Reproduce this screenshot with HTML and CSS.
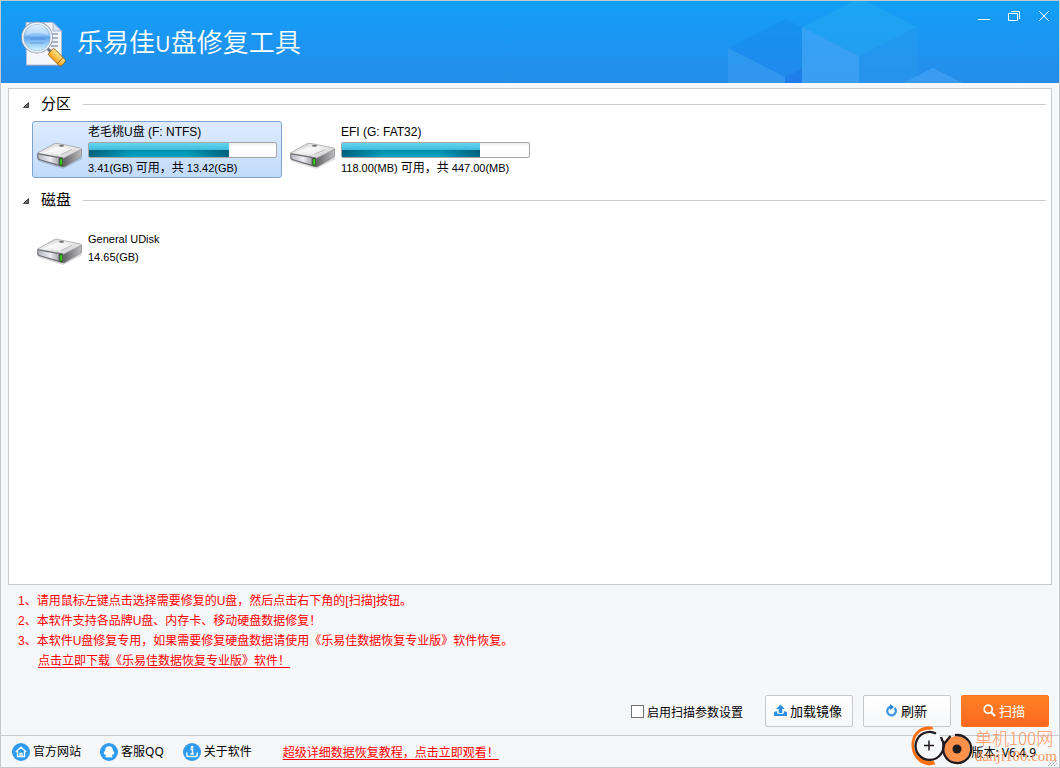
FILE: index.html
```html
<!DOCTYPE html>
<html lang="zh-CN">
<head>
<meta charset="utf-8">
<meta name="viewport" content="width=device-width, initial-scale=1">
<title>乐易佳U盘修复工具</title>
<link rel="stylesheet" href="styles.css">
</head>
<body>
<svg class="defs" width="0" height="0" aria-hidden="true">
  <defs>
    <linearGradient id="driveTop" x1="0" y1="0" x2="1" y2="1">
      <stop offset="0" stop-color="#b9b9bb"/><stop offset=".4" stop-color="#f4f4f5"/><stop offset="1" stop-color="#c4c4c6"/>
    </linearGradient>
    <linearGradient id="driveSide" x1="0" y1="0" x2="1" y2="0">
      <stop offset="0" stop-color="#5c5c5e"/><stop offset="1" stop-color="#bcbcbe"/>
    </linearGradient>
    <linearGradient id="driveFront" x1="0" y1="0" x2="1" y2="0">
      <stop offset="0" stop-color="#b8b8c2"/><stop offset=".6" stop-color="#ededf6"/><stop offset="1" stop-color="#a8a8b0"/>
    </linearGradient>
    <symbol id="drive" viewBox="0 0 48 28">
      <path d="M2 18 27 26 46 16" fill="none" stroke="#000" stroke-opacity=".15" stroke-width="2"/>
      <path d="M27 15 45.500 7v7.500L28 25l-2-1z" fill="url(#driveSide)" stroke="#77777a" stroke-width=".6"/>
      <path d="M1.500 11 18 1.800q1.500-.7 3-.5L44.500 6q1.500.6.500 1.600L28 16q-1 .4-2 .1z" fill="url(#driveTop)" stroke="#969698" stroke-width=".7"/>
      <path d="M10 9 21 4.500l14 2.700-9 5q-2 .6-4 .2z" fill="#fff" fill-opacity=".45"/>
      <path d="M25 12.500 36 7.500" stroke="#aaa" stroke-width=".7"/>
      <ellipse cx="25.500" cy="3.800" rx="2.600" ry="1.100" fill="#77787c"/>
      <path d="M1.300 11.300 26 15.300q1.500.4 1.500 2V24q0 1.300-1.500 1L3 18q-1.700-.5-1.800-2z" fill="#6d6d72"/>
      <path d="M2.300 12.400 22.500 16v6.500L4 17.300q-1.700-.6-1.700-2z" fill="url(#driveFront)"/>
      <path d="M23.400 16.200h3.200v8l-3.200-.9z" fill="#235a16"/>
      <path d="M24.300 17.200h1.600v5.600l-1.600-.4z" fill="#3be21d"/>
    </symbol>
  </defs>
</svg>
<div class="window">
  <header class="titlebar">
    <svg class="cubes" viewBox="720 1 250 82" aria-hidden="true">
      <path d="M728 48 785 19 802 27V69L785 77z" fill="#1580ec" fill-opacity=".3"/>
      <path d="M728 48 785 77V83H728z" fill="#4aa7f5" fill-opacity=".35"/>
      <path d="M785 77 802 69V83H785z" fill="#1d7ae8" fill-opacity=".75"/>
      <path d="M802 27 860-2 917 27 859 56z" fill="#2bb0f3" fill-opacity=".4"/>
      <path d="M802 27 859 56V83H802z" fill="#45a8f6" fill-opacity=".65"/>
      <path d="M859 56 917 27V83H859z" fill="#2a9bf0" fill-opacity=".45"/>
      <path d="M903 83 933 68 963 83z" fill="#3f9ff3" fill-opacity=".8"/>
    </svg>
    <div class="brand">
      <svg class="logo" width="46" height="48" viewBox="0 0 46 48" aria-hidden="true">
        <defs>
          <linearGradient id="lens" x1="0" y1="0" x2="0" y2="1">
            <stop offset="0" stop-color="#d2e9fd"/><stop offset=".42" stop-color="#8cc2f6"/><stop offset=".5" stop-color="#5da3ec"/><stop offset=".7" stop-color="#93caf6"/><stop offset="1" stop-color="#d9fbff"/>
          </linearGradient>
          <linearGradient id="handle" x1="0" y1="1" x2="1" y2="0">
            <stop offset="0" stop-color="#a95d09"/><stop offset=".35" stop-color="#f5a51c"/><stop offset=".65" stop-color="#ffe184"/><stop offset="1" stop-color="#bd6c0b"/>
          </linearGradient>
        </defs>
        <path d="M5 2.500h27l8.500 8.500v34h-35z" fill="#f5f6fc" stroke="#aebcdc"/>
        <path d="M5.500 45.500h35" stroke="#8298bb"/>
        <path d="M32 2.500V11h8.500z" fill="#dbe4f3" stroke="#91a6c9" stroke-width=".8"/>
        <path d="M30 14h7M31 18h6M31 22h6M30 26h7" stroke="#8e9ab4" stroke-width="1.500"/>
        <path d="M25 27l5 5" stroke="#6b7587" stroke-width="3"/>
        <circle cx="16" cy="17.500" r="14.500" fill="url(#lens)" stroke="#8a9bb2" stroke-width="2.800"/>
        <circle cx="16" cy="17.500" r="14.200" fill="none" stroke="#e9f2f9" stroke-width="1.700"/>
        <path d="M9 19h15M9 23h14" stroke="#346eb9" stroke-opacity=".3" stroke-width="1.500"/>
        <path d="M4.500 15Q7 5 16 4.500 26 5 27.500 15 16 11 4.500 15z" fill="#fff" fill-opacity=".35"/>
        <path d="m28 33 3.500-4q1-1 2.200 0L44 39.500q1 1.300 0 2.500l-3.200 3.500q-1.300 1-2.600 0L28 35.500q-1.200-1.200 0-2.500z" fill="url(#handle)" stroke="#8e510d" stroke-width=".8"/>
        <path d="m36.500 43.500 5.500-6" stroke="#b1620d" stroke-width="1"/>
      </svg>
      <h1 class="title">乐易佳<span class="title-latin">U</span>盘修复工具</h1>
    </div>
    <div class="controls">
      <button type="button" class="control" aria-label="最小化"><svg width="12" height="12" viewBox="0 0 12 12"><path d="M0 9.500h12"/></svg></button>
      <button type="button" class="control" aria-label="还原"><svg width="12" height="12" viewBox="0 0 12 12"><path d="M.5 3.500h9v7h-9zM3 1.500h8.500V9"/></svg></button>
      <button type="button" class="control" aria-label="关闭"><svg width="12" height="12" viewBox="0 0 12 12"><path d="M1 1l10 10M11 1 1 11"/></svg></button>
    </div>
  </header>

  <main class="main">
    <div class="panel">
      <section>
        <h2 class="group"><svg width="6" height="6" viewBox="0 0 6 6" aria-hidden="true"><path d="M5.500.5v5H.5z" fill="#666" stroke="#444"/></svg><span class="group-name">分区</span></h2>
        <div class="drives">
          <button type="button" class="drive selected">
            <svg class="drive-icon" width="48" height="28"><use href="#drive"/></svg>
            <span class="drive-info">
              <span class="drive-name">老毛桃U盘 (F: NTFS)</span>
              <span class="usage"><span class="used" style="width:74.6%"></span></span>
              <span class="drive-size">3.41(GB) <span class="cjk">可用，共</span> 13.42(GB)</span>
            </span>
          </button>
          <button type="button" class="drive">
            <svg class="drive-icon" width="48" height="28"><use href="#drive"/></svg>
            <span class="drive-info">
              <span class="drive-name">EFI (G: FAT32)</span>
              <span class="usage"><span class="used" style="width:73.6%"></span></span>
              <span class="drive-size">118.00(MB) <span class="cjk">可用，共</span> 447.00(MB)</span>
            </span>
          </button>
        </div>
      </section>
      <section>
        <h2 class="group"><svg width="6" height="6" viewBox="0 0 6 6" aria-hidden="true"><path d="M5.500.5v5H.5z" fill="#666" stroke="#444"/></svg><span class="group-name">磁盘</span></h2>
        <div class="drives">
          <button type="button" class="drive disk">
            <svg class="drive-icon" width="48" height="28"><use href="#drive"/></svg>
            <span class="drive-info">
              <span class="drive-size">General UDisk</span>
              <span class="drive-size">14.65(GB)</span>
            </span>
          </button>
        </div>
      </section>
    </div>
    <div class="notes">
      <p>1、请用鼠标左键点击选择需要修复的U盘，然后点击右下角的[扫描]按钮。</p>
      <p>2、本软件支持各品牌U盘、内存卡、移动硬盘数据修复！</p>
      <p>3、本软件U盘修复专用，如果需要修复硬盘数据请使用《乐易佳数据恢复专业版》软件恢复。</p>
      <p class="indent"><a class="link" href="#download">点击立即下载《乐易佳数据恢复专业版》软件！</a></p>
    </div>
    <div class="actions">
      <label class="option"><input type="checkbox" class="check"><span>启用扫描参数设置</span></label>
      <button type="button" class="btn">
        <svg width="13" height="13" viewBox="0 0 13 13" aria-hidden="true"><path d="M6.500.5 10.800 5H8.300v4H4.700V5H2.200z" fill="#2d8fe6"/><path d="M0 8.200q1-1 3-1v1.600l1 1.200h5l1-1.200V7.200q2 0 3 1V12H0z" fill="#2d8fe6"/></svg>
        <span>加载镜像</span>
      </button>
      <button type="button" class="btn">
        <svg width="13" height="13" viewBox="0 0 13 13" aria-hidden="true"><path d="M9.500 3.900A4.300 4.300 0 1 1 4.500 3.200L7 3" fill="none" stroke="#3b98e8" stroke-width="2.300"/><path d="M5 0v6l4-3z" fill="#2783da"/></svg>
        <span>刷新</span>
      </button>
      <button type="button" class="btn primary">
        <svg width="13" height="13" viewBox="0 0 13 13" aria-hidden="true"><circle cx="5.200" cy="5.200" r="4" fill="none" stroke="#fff" stroke-width="1.700"/><path d="m8 8 4 4" stroke="#fff" stroke-width="2.200"/></svg>
        <span>扫描</span>
      </button>
    </div>
  </main>

  <footer class="footer">
    <nav class="nav">
      <a href="#site"><svg width="18" height="18" viewBox="0 0 18 18" aria-hidden="true"><circle cx="9" cy="9" r="9" fill="#2f9bf0"/><path d="m3.800 9 5.200-4.800L14.200 9M5.500 8.500v5h7v-5M8 13.500v-3.200h2v3.200" fill="none" stroke="#fff" stroke-width="1.300"/></svg>官方网站</a>
      <a href="#service"><svg width="18" height="18" viewBox="0 0 18 18" aria-hidden="true"><circle cx="9" cy="9" r="9" fill="#2f9bf0"/><path d="M9 3.200c2.700 0 3.900 2 3.900 4.300 1 1.300 1.700 3 1.200 4-.4.300-.9-.1-1.300-.6-.2.800-.5 1.200-1 1.700.8.400 1.200 1.600-.3 1.800H9.800L9 14l-.8.400H6.500c-1.500-.2-1.100-1.400-.3-1.800-.5-.5-.8-.9-1-1.700-.4.500-.9.900-1.300.6-.5-1 .2-2.700 1.200-4C5.100 5.200 6.300 3.200 9 3.200z" fill="#fff"/></svg>客服QQ</a>
      <a href="#about"><svg width="18" height="18" viewBox="0 0 18 18" aria-hidden="true"><circle cx="9" cy="9" r="9" fill="#2f9bf0"/><circle cx="9" cy="4" r="1.300" fill="#fff"/><path d="M7.500 6.300h2V11M7.500 11h3.300" fill="none" stroke="#fff" stroke-width="1.500"/><path d="M3.800 9.500V12q0 1.500 1.500 1.500h7.400q1.500 0 1.500-1.500V9.500" fill="none" stroke="#fff" stroke-width="1.400"/></svg>关于软件</a>
    </nav>
    <a class="link" href="#tutorial">超级详细数据恢复教程，点击立即观看！</a>
    <span class="version">版本: V6.4.9</span>
    <svg class="grip" width="10" height="10" viewBox="0 0 10 10" aria-hidden="true"><path d="M1 10l9-9M4 10l6-6M7 10l3-3" stroke="#a9abb0" stroke-dasharray="2 1"/></svg>
    <div class="watermark">
      <svg width="64" height="42" viewBox="0 0 64 42" aria-hidden="true">
        <path d="M22 1.500h-3C9 2 2 10 2.500 21c.5 10 7 18.500 18 19.500l6-1.200-2-3.500c-10 1.800-19-5-19.500-15C5 13 9 6 17 5l7.500-.8q-.5-2.400-2.500-2.700z" fill="#ff7110"/>
        <circle cx="20.500" cy="20.500" r="14" fill="#f7f8fa"/>
        <path d="M27 8.500A14 14 0 1 0 34 17" fill="none" stroke="#211a1c" stroke-width="2.300"/>
        <path d="M15 20.500h10M20 15.500v10" stroke="#211a1c" stroke-width="1.500"/>
        <circle cx="48" cy="24" r="13" fill="#ff914b"/>
        <path d="M46 10.200a14 14 0 1 1-10.500 8M32 12q.5 3 3.500 6.500l6-7.500M35.500 18.500q-1.500 5-1.500 9" fill="none" stroke="#211a1c" stroke-width="2.300"/>
        <circle cx="48" cy="24" r="4.500" fill="#211a1c"/>
      </svg>
      <span class="watermark-text"><span class="watermark-name">单机100网</span><span class="watermark-site">danji100.com</span></span>
    </div>
  </footer>
</div>
</body>
</html>
```
FILE: styles.css
```css
* { box-sizing: border-box; }

body {
  margin: 0;
  font-family: "Liberation Sans", "Noto Sans CJK SC", sans-serif;
  font-size: 12px;
  color: #000;
}

button { font: inherit; color: inherit; margin: 0; }
h1, h2, p { margin: 0; font-weight: 400; }
.defs { position: absolute; }

.window {
  display: flex;
  flex-direction: column;
  min-height: 100vh;
  border: 1px solid #c8c9cd;
  background: #f6f7f9;
}

/* title bar */
.titlebar {
  position: relative;
  display: flex;
  justify-content: space-between;
  align-items: flex-start;
  height: 82px;
  background: linear-gradient(#119ff8, #268cea);
  overflow: hidden;
}
.cubes { position: absolute; top: 0; right: 89px; width: 250px; height: 82px; }
.brand {
  display: flex;
  align-items: center;
  gap: 10px;
  padding: 18px 0 0 20px;
}
.title {
  font-family: "Noto Sans CJK SC", sans-serif;
  font-size: 26px;
  font-weight: 350;
  line-height: 44px;
  color: #fff;
  padding-bottom: 4px;
}
.title-latin { font-size: 22px; }
.controls { position: relative; display: flex; }
.control {
  display: flex;
  align-items: center;
  justify-content: center;
  width: 30px;
  height: 30px;
  padding: 0;
  border: 0;
  background: none;
}
.control svg { fill: none; stroke: #fff; stroke-width: 1; }

/* drive list */
.main { flex: 1; display: flex; flex-direction: column; padding: 5px 7px 8px; }
.panel {
  flex: 1;
  padding: 0 5px 0 14px;
  border: 1px solid #c9cacd;
  background: #fff;
}
.group {
  display: flex;
  align-items: center;
  height: 31px;
  margin-bottom: 1px;
  font-size: 15px;
  line-height: 28px;
}
.group svg { margin-right: 12px; }
.group-name { padding-bottom: 2px; }
.group::after { content: ""; flex: 1; height: 1px; margin-left: 12px; background: #c9cacc; }
.drives { display: flex; flex-wrap: wrap; gap: 3px; padding-left: 9px; margin-bottom: 7px; }
.drive {
  display: flex;
  align-items: center;
  gap: 4px;
  width: 250px;
  height: 57px;
  padding: 0 3px;
  border: 1px solid transparent;
  border-radius: 3px;
  background: none;
  text-align: left;
}
.drive.selected { border-color: #7da2ce; background: linear-gradient(#deebfd, #c1dbfc); }
.drive-icon { flex: none; margin-top: 12px; }
.drive-info { flex: 1; display: flex; flex-direction: column; }
.drive-name { line-height: 18px; }
.drive-size { font-size: 11px; line-height: 18px; white-space: nowrap; }
.cjk { font-size: 12px; line-height: 16px; }
.usage {
  display: block;
  width: 189px;
  height: 16px;
  margin: 1px 0;
  border: 1px solid #a5a5a5;
  border-radius: 2px;
  background: linear-gradient(#eee, #fff 30%, #fafafa);
  overflow: hidden;
}
.used {
  display: block;
  height: 100%;
  background:
    linear-gradient(90deg, rgba(0, 60, 85, .6), transparent 30%, transparent 70%, rgba(0, 60, 85, .6)) 0 100% / 100% 50% no-repeat,
    linear-gradient(#67d5ee, #3dbddd 49%, #008fae 50%, #0aa5c4);
}
.disk .drive-info { padding-top: 4px; }

/* hints */
.notes { padding: 6px 10px 24px; color: #f00; line-height: 20px; }
.indent { padding-left: 20px; }
.link { color: #f00; text-decoration: underline; text-underline-offset: 2px; }

/* actions */
.actions { display: flex; justify-content: flex-end; align-items: center; gap: 10px; padding-right: 3px; }
.option { display: flex; align-items: center; gap: 3px; margin-right: 12px; }
.check {
  appearance: none;
  width: 13px;
  height: 13px;
  margin: 0;
  border: 1px solid #707070;
  background: #fff;
}
.check:checked { background: #2f9bf0; }
.btn {
  display: flex;
  align-items: center;
  justify-content: center;
  gap: 3px;
  width: 88px;
  height: 32px;
  padding: 0 2px 1px 0;
  border: 1px solid #c6c8cc;
  border-radius: 2px;
  background: linear-gradient(#fff, #f7f8fa);
  font-size: 13px;
}
.btn.primary { border-color: #fd7420; background: linear-gradient(#fe8124, #fd6820); color: #fff; }

/* footer */
.footer {
  position: relative;
  display: flex;
  align-items: center;
  height: 32px;
  padding: 0 23px 0 11px;
  border-top: 1px solid #c9cacd;
  font-family: "Noto Sans", "Noto Sans CJK SC", sans-serif;
}
.nav { display: flex; gap: 19px; margin-right: 31px; }
.nav a { display: flex; align-items: center; gap: 3px; color: #000; text-decoration: none; line-height: 18px; }
.version { margin-left: auto; }
.grip { position: absolute; right: 2px; bottom: 1px; }
.watermark { position: absolute; right: 2px; bottom: 0; display: flex; gap: 2px; pointer-events: none; }
.watermark-text {
  display: flex;
  flex-direction: column;
  padding-top: 3px;
  color: #ff8a4a;
  opacity: .85;
}
.watermark-name { font-family: "Noto Sans CJK SC", sans-serif; font-size: 17px; font-weight: 300; line-height: 20px; }
.watermark-site { font-family: "Liberation Serif", serif; font-size: 15px; line-height: 17px; }
```
